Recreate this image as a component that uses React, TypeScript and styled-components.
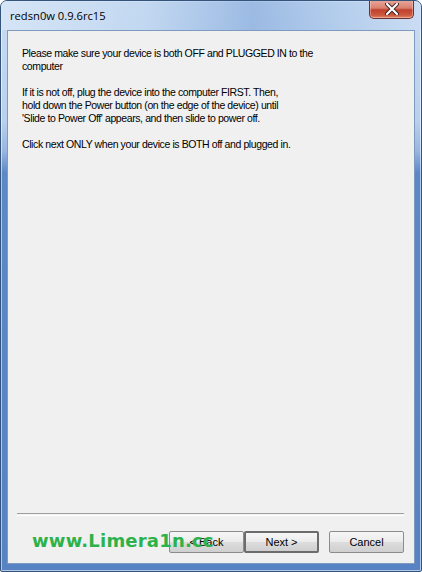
import styled, { createGlobalStyle } from 'styled-components';

const GlobalStyle = createGlobalStyle`
  html, body {
    margin: 0;
    padding: 0;
    background: #ffffff;
  }
`;

export default function App() {
  return (
    <>
      <GlobalStyle />
      <Window>
        <TitleBar>
          <Title>redsn0w 0.9.6rc15</Title>
          <CloseButton>
            <svg width='14' height='12' viewBox='0 0 14 12'>
              <path d='M2 1 L12 11 M12 1 L2 11' stroke='#3a2020' strokeWidth='4' strokeLinecap='round' />
              <path d='M2 1 L12 11 M12 1 L2 11' stroke='#ffffff' strokeWidth='2.2' strokeLinecap='round' />
            </svg>
          </CloseButton>
        </TitleBar>
        <Client>
          <Body>
            <Paragraph>
              Please make sure your device is both OFF and PLUGGED IN to the
              <br />
              computer
            </Paragraph>
            <Paragraph>
              If it is not off, plug the device into the computer FIRST. Then,
              <br />
              hold down the Power button (on the edge of the device) until
              <br />
              'Slide to Power Off' appears, and then slide to power off.
            </Paragraph>
            <Paragraph>Click next ONLY when your device is BOTH off and plugged in.</Paragraph>
          </Body>
          <Separator />
          <ButtonRow>
            <Button>&lt; Back</Button>
            <Button $default>Next &gt;</Button>
            <Button $gap>Cancel</Button>
          </ButtonRow>
          <Watermark>www.Limera1n.cc</Watermark>
        </Client>
      </Window>
    </>
  );
}

const Window = styled.div`
  box-sizing: border-box;
  width: 422px;
  height: 572px;
  display: flex;
  flex-direction: column;
  border: 1px solid #34547c;
  border-radius: 7px 7px 2px 2px;
  background: linear-gradient(
    180deg,
    #c9dcf2 0px,
    #b9d0ed 120px,
    #98b6e0 150px,
    #5c88c8 172px,
    #5783c4 100%
  );
  box-shadow: inset 0 0 0 1px rgba(255, 255, 255, 0.55);
  overflow: hidden;
`;

const TitleBar = styled.div`
  height: 29px;
  display: flex;
  align-items: flex-start;
  padding-left: 8px;
  background: linear-gradient(
    90deg,
    rgba(215, 230, 247, 0.9) 0%,
    rgba(190, 213, 240, 0.6) 35%,
    rgba(120, 160, 215, 0.55) 60%,
    rgba(150, 185, 228, 0.4) 80%,
    rgba(205, 222, 244, 0.6) 100%
  );
`;

const Title = styled.span`
  font-family: 'Open Sans', 'Noto Sans', sans-serif;
  font-size: 11.2px;
  color: #000000;
  line-height: 16px;
  margin-top: 7px;
  margin-left: 1px;
`;

const CloseButton = styled.div`
  margin-left: auto;
  margin-right: 7px;
  margin-top: -1px;
  width: 45px;
  height: 19px;
  display: flex;
  align-items: center;
  justify-content: center;
  box-sizing: border-box;
  border: 1px solid #6b3030;
  border-top: none;
  border-radius: 0 0 5px 5px;
  background: linear-gradient(180deg, #e9a99c 0%, #d98070 45%, #c0402c 55%, #cc5a40 85%, #e08a6a 100%);
  box-shadow: inset 0 0 0 1px rgba(255, 210, 200, 0.45);
`;

const Client = styled.div`
  position: relative;
  flex: 1;
  display: flex;
  flex-direction: column;
  margin: 0 6px 7px 6px;
  border: 1px solid #7f9abf;
  background: #f0f0f0;
`;

const Body = styled.div`
  flex: 1;
  padding: 16px 14px 0 14px;
  font-family: 'Liberation Sans', Arial, sans-serif;
  font-size: 10.5px;
  letter-spacing: -0.4px;
  line-height: 13px;
  color: #000000;
`;

const Paragraph = styled.p`
  margin: 0 0 13px 0;
`;

const Separator = styled.div`
  margin: 0 10px 0 9px;
  height: 1px;
  border-top: 1px solid #a0a0a0;
  border-bottom: 1px solid #ffffff;
`;

const ButtonRow = styled.div`
  display: flex;
  justify-content: flex-end;
  padding: 15px 10px 10px 0;
`;

const Button = styled.div<{ $default?: boolean; $gap?: boolean }>`
  box-sizing: border-box;
  width: 75px;
  height: 22px;
  margin-left: ${(p) => (p.$gap ? '10px' : '0')};
  display: flex;
  align-items: center;
  justify-content: center;
  font-family: 'Liberation Sans', Arial, sans-serif;
  font-size: 11px;
  color: #000000;
  background: linear-gradient(180deg, #f6f6f6 0%, #ebebeb 50%, #dddddd 51%, #cfcfcf 100%);
  border: ${(p) => (p.$default ? '2px solid #6c6c6c' : '1px solid #8c8c8c')};
  border-radius: 2px;
`;

const Watermark = styled.div`
  position: absolute;
  left: 24px;
  bottom: 12px;
  font-family: 'DejaVu Sans', Verdana, sans-serif;
  font-weight: bold;
  font-size: 18px;
  line-height: 20px;
  color: #2db24a;
  letter-spacing: 0.2px;
`;
